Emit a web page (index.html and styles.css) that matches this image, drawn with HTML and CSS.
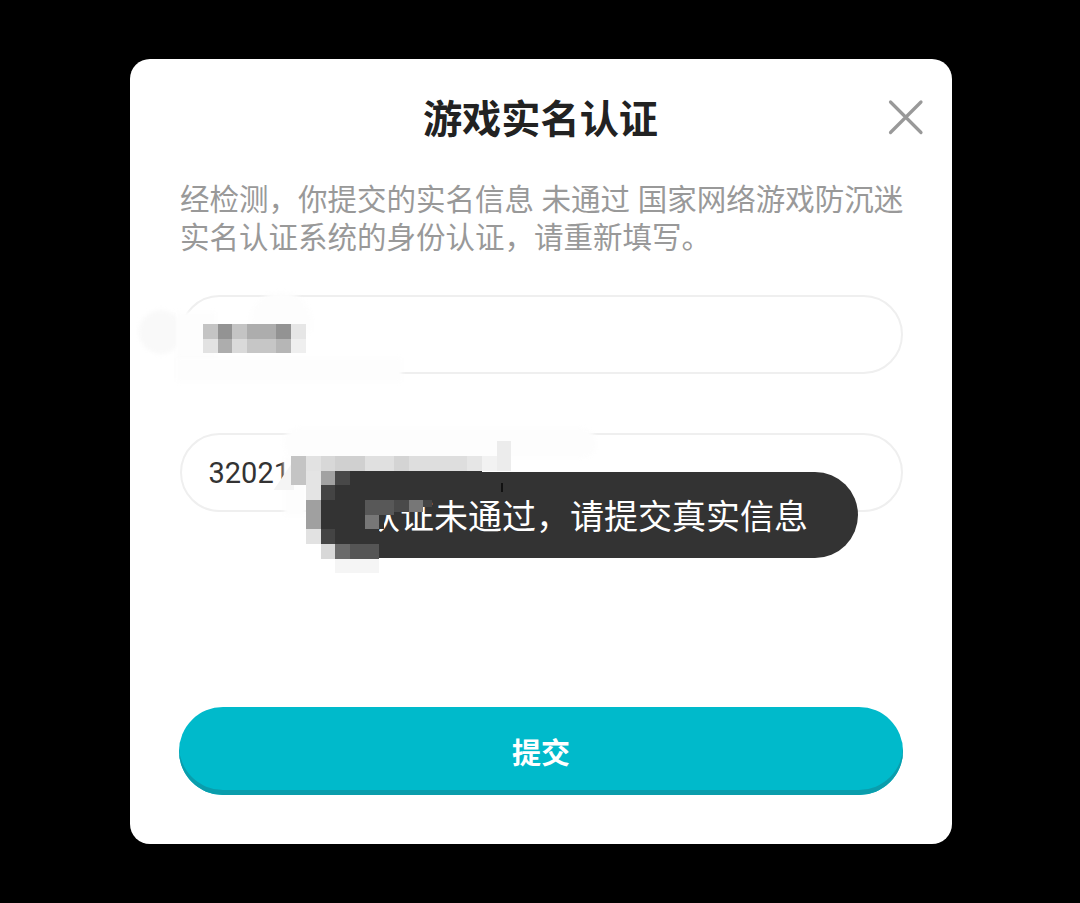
FILE: index.html
```html
<!DOCTYPE html>
<html lang="zh-CN">
<head>
<meta charset="utf-8">
<title>游戏实名认证</title>
<link rel="stylesheet" href="styles.css">
</head>
<body>
<main class="dialog">
  <header class="dialog-head">
    <h1 class="title">游戏实名认证</h1>
    <button class="close" aria-label="关闭">
      <svg width="36" height="36" viewBox="0 0 36 36"><path d="M2.500 3 33 33.500M33 3 2.500 33.500" stroke="#999" stroke-width="3.200" stroke-linecap="round" fill="none"/></svg>
    </button>
  </header>
  <p class="message">经检测，你提交的实名信息 未通过 国家网络游戏防沉迷实名认证系统的身份认证，请重新填写。</p>
  <div class="field field-name"></div>
  <div class="field field-id"><span class="id-text">32021</span></div>
  <button class="submit">提交</button>
</main>

<div class="smudge s1"></div>
<div class="smudge s2"></div>
<div class="smudge s2b"></div>
<div class="smudge s3"></div>
<div class="smudge s4"></div>
<div class="smudge s5"></div>
<div class="smudge-cut"></div>

<div class="toast">认证未通过，请提交真实信息</div>

<svg class="mosaic" width="1080" height="903" viewBox="0 0 1080 903" shape-rendering="crispEdges">
  <g transform="translate(203 324) scale(14.67)">
    <rect x="0" y="0" width="1" height="1" fill="#c4c4c4"/><rect x="1" y="0" width="1" height="1" fill="#939393"/><rect x="2" y="0" width="1" height="1" fill="#c4c4c4"/><rect x="3" y="0" width="2" height="1" fill="#adadad"/><rect x="5" y="0" width="1" height="1" fill="#939393"/><rect x="6" y="0" width="1" height="1" fill="#e6e6e6"/>
    <rect x="0" y="1" width="1" height="1" fill="#e2e2e2"/><rect x="1" y="1" width="1" height="1" fill="#adadad"/><rect x="2" y="1" width="1" height="1" fill="#dadada"/><rect x="3" y="1" width="2" height="1" fill="#c6c6c6"/><rect x="5" y="1" width="1" height="1" fill="#b6b6b6"/><rect x="6" y="1" width="1" height="1" fill="#efefef"/>
  </g>
  <g transform="translate(291.300 456) scale(14.67)">
    <rect x="0" y="0" width="1" height="2" fill="#c4c4c4"/><rect x="1" y="0" width="1" height="1" fill="#e2e2e2"/><rect x="2" y="0" width="1" height="1" fill="#d8d8d8"/><rect x="3" y="0" width="2" height="1" fill="#d0d0d0"/><rect x="5" y="0" width="2" height="1" fill="#e0e0e0"/><rect x="7" y="0" width="1" height="1" fill="#d4d4d4"/><rect x="8" y="0" width="4" height="1" fill="#dedede"/><rect x="12" y="0" width="1" height="1" fill="#e6e6e6"/><rect x="13" y="0" width="1" height="1" fill="#f2f2f2"/><rect x="14" y="-1" width="1" height="2" fill="#ececec"/>
    <rect x="1" y="1" width="1" height="2" fill="#e4e4e4"/><rect x="2" y="1" width="1" height="1" fill="#a2a2a2"/><rect x="3" y="1" width="1" height="1" fill="#484848"/><rect x="4" y="1" width="9" height="1" fill="#333"/>
    <rect x="2" y="2" width="1" height="1" fill="#444"/><rect x="3" y="2" width="5" height="1" fill="#333"/>
    <rect x="1" y="3" width="1" height="2" fill="#a0a0a0"/><rect x="2" y="3" width="3" height="2" fill="#333"/>
    <rect x="5" y="3" width="2" height="1" fill="#585858"/><rect x="7" y="3" width="1" height="0.800" fill="#4a4a4a"/><rect x="8" y="3" width="1" height="0.800" fill="#777"/><rect x="9" y="3" width="0.600" height="0.500" fill="#444"/>
    <rect x="5" y="4" width="1" height="1" fill="#777"/><rect x="6" y="4" width="0.300" height="1" fill="#333"/>
    <rect x="1" y="5" width="1" height="1" fill="#e2e2e2"/><rect x="2" y="5" width="1" height="1" fill="#444"/><rect x="3" y="5" width="3" height="1" fill="#333"/>
    <rect x="2" y="6" width="1" height="1" fill="#d8d8d8"/><rect x="3" y="6" width="1" height="1" fill="#6a6a6a"/><rect x="4" y="6" width="2" height="1" fill="#555"/>
    <rect x="3" y="7" width="3" height="1" fill="#f5f5f5"/>
  </g>
  <rect x="501" y="483" width="2" height="9" fill="#111"/>
</svg>
</body>
</html>
```
FILE: styles.css
```css
* { box-sizing: border-box; }
html, body { margin: 0; height: 100%; }
body {
  position: relative;
  width: 1080px;
  height: 903px;
  background: #000;
  overflow: hidden;
  padding: 59px 0 0 130px;
  font-family: "Noto Sans CJK SC", "Noto Sans", sans-serif;
}
.dialog {
  width: 822px;
  height: 785px;
  background: #fff;
  border-radius: 20px;
  padding: 0 49px 0 50px;
  display: flex;
  flex-direction: column;
}
.dialog-head {
  height: 119px;
  position: relative;
  display: flex;
  justify-content: center;
  padding: 38px 2px 0 0;
}
.title {
  margin: 0;
  font-size: 39.200px;
  font-weight: 700;
  color: #222;
  line-height: 1;
}
.close {
  position: absolute;
  right: -21px;
  top: 40px;
  width: 36px;
  height: 36px;
  padding: 0;
  border: 0;
  background: none;
  display: block;
}
.close svg { display: block; }
.message {
  margin: 0 -6px 0 0;
  font-size: 29.500px;
  line-height: 38px;
  word-spacing: 1px;
  color: #999;
  height: 117px;
}
.field {
  height: 79px;
  border: 2.500px solid #efefef;
  border-radius: 40px;
  flex: none;
  display: flex;
  align-items: center;
  padding: 1px 0 0 26.500px;
}
.field-id { margin-top: 59px; }
.id-text {
  font-family: Roboto, sans-serif;
  font-size: 29px;
  color: #333;
}
.submit {
  margin: 195px 0 0 -1px;
  height: 88px;
  border: 0;
  border-radius: 44px;
  background: #00bacb;
  box-shadow: inset 0 -5px 0 #0a9dac;
  color: #fff;
  font-family: inherit;
  font-size: 29px;
  font-weight: 700;
}
.toast {
  position: absolute;
  left: 320px;
  top: 472px;
  width: 538px;
  height: 86px;
  border-radius: 43px;
  background: #333;
  color: #fff;
  font-size: 34px;
  line-height: 86px;
  padding-left: 46px;
  white-space: nowrap;
}
.mosaic { position: absolute; left: 0; top: 0; pointer-events: none; }
.smudge { position: absolute; background: #fdfdfd; filter: blur(2px); }
.s1 { left: 139px; top: 310px; width: 44px; height: 44px; border-radius: 22px; background: #f9f9f9; }
.s2 { left: 250px; top: 292px; width: 62px; height: 40px; border-radius: 30px 30px 0 0; }
.s2b { left: 176px; top: 312px; width: 40px; height: 66px; }
.s3 { left: 176px; top: 358px; width: 226px; height: 24px; }
.s4 { left: 284px; top: 428px; width: 312px; height: 30px; border-radius: 14px; }
.s5 { left: 284px; top: 456px; width: 22px; height: 60px; }
.smudge-cut {
  position: absolute;
  left: 270px;
  top: 460px;
  width: 24px;
  height: 30px;
  background: #f4f4f4;
  clip-path: polygon(100% 0, 100% 100%, 15% 100%);
}
```
